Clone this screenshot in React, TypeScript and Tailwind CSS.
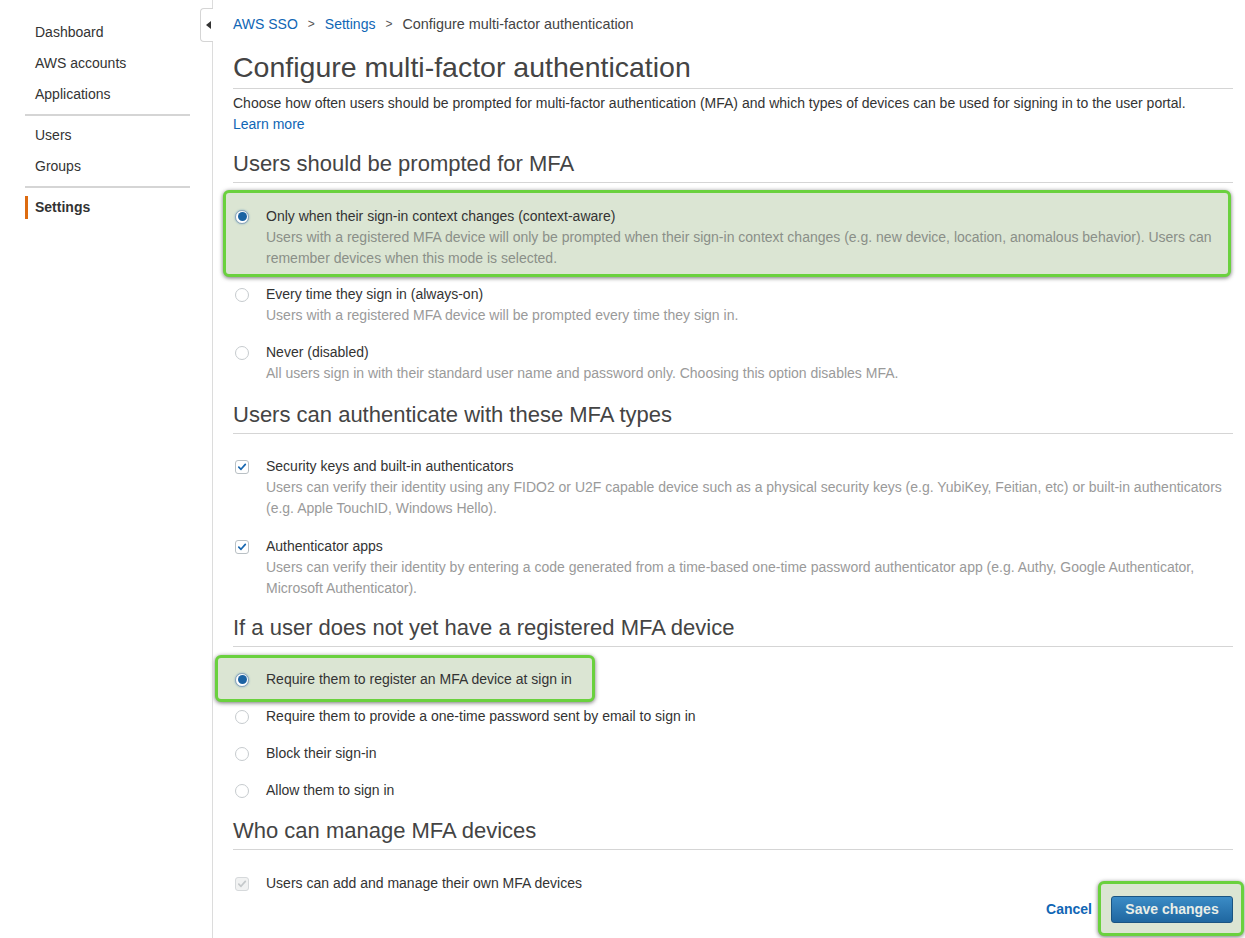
import { ReactNode } from 'react'

const font = { fontFamily: '"Liberation Sans", Arial, sans-serif' }

function Radio({ checked }: { checked?: boolean }) {
  if (checked) {
    return (
      <span className="flex h-[14px] w-[14px] shrink-0 items-center justify-center rounded-full border border-[#8aa3b8] bg-white shadow-[0_0_2px_rgba(20,100,170,0.5)]">
        <span className="h-[9px] w-[9px] rounded-full bg-[#1b63a3]" />
      </span>
    )
  }
  return <span className="h-[14px] w-[14px] shrink-0 rounded-full border border-[#c6cbce] bg-white" />
}

function Check({ disabled }: { disabled?: boolean }) {
  return (
    <span
      className={
        disabled
          ? 'flex h-[14px] w-[14px] shrink-0 items-center justify-center rounded-[3px] border border-[#d6d9db] bg-[#f1f2f2]'
          : 'flex h-[14px] w-[14px] shrink-0 items-center justify-center rounded-[3px] border border-[#b9c0c4] bg-white'
      }
    >
      <svg width="10" height="10" viewBox="0 0 10 10">
        <path
          d="M1.8 5.2 L4 7.3 L8.3 2.4"
          fill="none"
          stroke={disabled ? '#c4c8ca' : '#1867b0'}
          strokeWidth="1.7"
          strokeLinecap="round"
          strokeLinejoin="round"
        />
      </svg>
    </span>
  )
}

interface OptionProps {
  control: ReactNode
  label: string
  desc?: string
  className?: string
  descColor?: string
}

function Option({ control, label, desc, className = '', descColor = 'text-[#9a9a9a]' }: OptionProps) {
  return (
    <div className={'flex ' + className}>
      <div className="flex h-[21px] w-[31px] shrink-0 items-center">{control}</div>
      <div className="flex-1">
        <div className="text-[14px] leading-[21px] text-[#333]">{label}</div>
        {desc && <div className={'text-[14px] leading-[21px] ' + descColor}>{desc}</div>}
      </div>
    </div>
  )
}

function Heading({ children, className = '' }: { children: ReactNode; className?: string }) {
  return (
    <h2 className={'border-b border-[#d5d5d5] pb-[4px] text-[22px] leading-[28px] text-[#444] ' + className}>
      {children}
    </h2>
  )
}

const nav1 = ['Dashboard', 'AWS accounts', 'Applications']
const nav2 = ['Users', 'Groups']

export default function App() {
  return (
    <div className="flex min-h-[938px] bg-white" style={font}>
      <aside className="relative w-[213px] shrink-0 border-r border-[#dcdcdc] pt-[17px]">
        {nav1.map((n) => (
          <div key={n} className="h-[31px] pl-[35px] text-[14px] leading-[31px] text-[#333]">
            {n}
          </div>
        ))}
        <div className="my-[4px] ml-[25px] mr-[22px] border-t-[2px] border-[#d5d5d5]" />
        {nav2.map((n) => (
          <div key={n} className="h-[31px] pl-[35px] text-[14px] leading-[31px] text-[#333]">
            {n}
          </div>
        ))}
        <div className="my-[4px] ml-[25px] mr-[22px] border-t-[2px] border-[#d5d5d5]" />
        <div className="ml-[25px] flex h-[31px] items-center">
          <span className="h-[23px] w-[3px] bg-[#dd6b10]" />
          <span className="pl-[7px] text-[14px] font-bold text-[#333]">Settings</span>
        </div>
        <div className="absolute right-[-1px] top-[8px] flex h-[34px] w-[13px] items-center justify-center rounded-l-[4px] border border-r-0 border-[#d5d5d5] bg-white">
          <span className="ml-[2px] h-0 w-0 border-y-[4px] border-r-[5px] border-y-transparent border-r-[#333]" />
        </div>
      </aside>

      <main className="flex-1 pl-[20px] pr-[12px] pt-[14px]">
        <nav className="flex items-center text-[14px] leading-[20px] text-[#444]">
          <span className="text-[#1066b5]">AWS SSO</span>
          <span className="px-[10px] text-[12px] text-[#555]">&gt;</span>
          <span className="text-[#1066b5]">Settings</span>
          <span className="px-[10px] text-[12px] text-[#555]">&gt;</span>
          <span className="text-[14.4px]">Configure multi-factor authentication</span>
        </nav>

        <h1 className="mt-[16px] border-b border-[#d5d5d5] pb-[4px] text-[28.5px] leading-[34px] text-[#444]">
          Configure multi-factor authentication
        </h1>
        <p className="mt-[4px] text-[14px] leading-[21px] text-[#333]">
          Choose how often users should be prompted for multi-factor authentication (MFA) and which types of devices can
          be used for signing in to the user portal.
        </p>
        <p className="text-[14px] leading-[21px] text-[#1066b5]">Learn more</p>

        <Heading className="mt-[15px]">Users should be prompted for MFA</Heading>
        <Option
          control={<Radio checked />}
          label="Only when their sign-in context changes (context-aware)"
          desc="Users with a registered MFA device will only be prompted when their sign-in context changes (e.g. new device, location, anomalous behavior). Users can remember devices when this mode is selected."
          descColor="text-[#8a8f88]"
          className="-ml-[10px] mr-[2px] mt-[7px] rounded-[6px] border-[3px] border-[#6ad13e] bg-[#dbe5d3] pb-[5px] pl-[9px] pr-[4px] pt-[13px] shadow-[0_1px_4px_rgba(0,0,0,0.55)]"
        />
        <Option
          control={<Radio />}
          label="Every time they sign in (always-on)"
          desc="Users with a registered MFA device will be prompted every time they sign in."
          className="mt-[7px] pl-[2px]"
        />
        <Option
          control={<Radio />}
          label="Never (disabled)"
          desc="All users sign in with their standard user name and password only. Choosing this option disables MFA."
          className="mt-[16px] pl-[2px]"
        />

        <Heading className="mt-[17px]">Users can authenticate with these MFA types</Heading>
        <Option
          control={<Check />}
          label="Security keys and built-in authenticators"
          desc="Users can verify their identity using any FIDO2 or U2F capable device such as a physical security keys (e.g. YubiKey, Feitian, etc) or built-in authenticators (e.g. Apple TouchID, Windows Hello)."
          className="mt-[22px] pl-[2px]"
        />
        <Option
          control={<Check />}
          label="Authenticator apps"
          desc="Users can verify their identity by entering a code generated from a time-based one-time password authenticator app (e.g. Authy, Google Authenticator, Microsoft Authenticator)."
          className="mt-[17px] pl-[2px]"
        />

        <Heading className="mt-[15px]">If a user does not yet have a registered MFA device</Heading>
        <div className="flex">
          <Option
            control={<Radio checked />}
            label="Require them to register an MFA device at sign in"
            className="-ml-[18px] mt-[8px] rounded-[6px] border-[3px] border-[#6ad13e] bg-[#dbe5d3] pb-[9px] pl-[17px] pr-[20px] pt-[11px] shadow-[0_1px_4px_rgba(0,0,0,0.55)]"
          />
        </div>
        <Option
          control={<Radio />}
          label="Require them to provide a one-time password sent by email to sign in"
          className="mt-[4px] pl-[2px]"
        />
        <Option control={<Radio />} label="Block their sign-in" className="mt-[16px] pl-[2px]" />
        <Option control={<Radio />} label="Allow them to sign in" className="mt-[16px] pl-[2px]" />

        <Heading className="mt-[16px]">Who can manage MFA devices</Heading>
        <Option
          control={<Check disabled />}
          label="Users can add and manage their own MFA devices"
          className="mt-[23px] pl-[2px]"
        />

        <div className="mt-[2px] flex items-center justify-end">
          <span className="mr-[19px] text-[14px] font-bold text-[#1066b5]">Cancel</span>
          <div className="-mb-[13px] -ml-[13px] -mr-[11px] -mt-[15px] rounded-[6px] border-[3px] border-[#6ad13e] bg-[#dbe5d3] pb-[10px] pl-[10px] pr-[8px] pt-[12px] shadow-[0_1px_4px_rgba(0,0,0,0.55)]">
            <button className="h-[27px] w-[122px] rounded-[3px] border border-[#1a5482] bg-gradient-to-b from-[#3b8cc6] to-[#1f67a0] text-[14px] font-bold text-[#e9eee8]">
              Save changes
            </button>
          </div>
        </div>
      </main>
    </div>
  )
}
